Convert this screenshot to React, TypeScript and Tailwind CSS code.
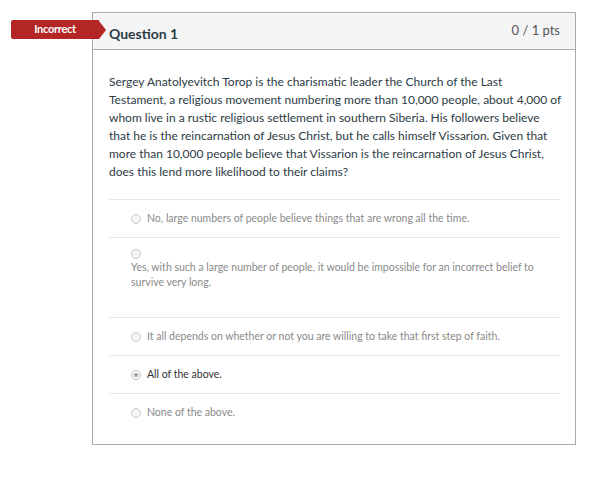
import React from 'react';

const answers = [
  { text: 'No, large numbers of people believe things that are wrong all the time.', selected: false, block: false },
  { text: 'Yes, with such a large number of people, it would be impossible for an incorrect belief to survive very long.', selected: false, block: true },
  { text: 'It all depends on whether or not you are willing to take that first step of faith.', selected: false, block: false },
  { text: 'All of the above.', selected: true, block: false },
  { text: 'None of the above.', selected: false, block: false },
];

const lines = [
  'Sergey Anatolyevitch Torop is the charismatic leader the Church of the Last',
  'Testament, a religious movement numbering more than 10,000 people, about 4,000 of',
  'whom live in a rustic religious settlement in southern Siberia. His followers believe',
  'that he is the reincarnation of Jesus Christ, but he calls himself Vissarion. Given that',
  'more than 10,000 people believe that Vissarion is the reincarnation of Jesus Christ,',
  'does this lend more likelihood to their claims?',
];

function Radio({ checked }: { checked: boolean }) {
  return (
    <span className="flex h-[10px] w-[10px] shrink-0 items-center justify-center rounded-full border border-[#c8c8c8] bg-[#f4f4f4]">
      {checked && <span className="h-[4px] w-[4px] rounded-full bg-[#a0a0a0]" />}
    </span>
  );
}

export default function App() {
  return (
    <div className="h-[478px] w-[616px] bg-white pt-3 font-['Lato','Liberation_Sans',sans-serif] text-[#2d3b45]">
      <div className="relative ml-[92px] w-[484px] border border-[#aaaaaa]">
        <div className="absolute left-[-82px] top-[7px] flex h-[19px] items-center">
          <div className="flex h-[19px] w-[88px] items-center justify-center rounded-l-[2px] bg-[#b42625] text-[11px] font-bold tracking-[-0.3px] text-white">
            Incorrect
          </div>
          <div className="h-0 w-0 border-y-[9.5px] border-l-[7px] border-y-transparent border-l-[#b42625]" />
        </div>
        <div className="flex h-[37px] items-center justify-between border-b border-[#aaaaaa] bg-[#f5f5f5] pl-4 pr-[15px]">
          <div className="pt-[4px] text-[14px] font-bold">Question 1</div>
          <div className="pb-[1px] text-[13px] text-[#555]">0 / 1 pts</div>
        </div>
        <div className="px-4 pt-[23px] pb-[23px]">
          <p className="mr-[-8px] whitespace-nowrap text-[12px] leading-[18px]">
            {lines.map((l, i) => (
              <React.Fragment key={i}>
                {l}
                {i < lines.length - 1 && <br />}
              </React.Fragment>
            ))}
          </p>
          <div className="mt-[18px]">
            {answers.map((a, i) => (
              <div key={i} className={`border-t border-[#e6e6e6] pl-[22px] text-[10.5px] ${i === 4 ? 'pt-[11px]' : ''} ${a.block ? 'h-[80px] pt-[11px]' : i === 4 ? '' : 'h-[38px]'} ${a.selected ? 'text-[#333]' : 'text-[#8a8a8a]'}`}>
                {a.block ? (
                  <div>
                    <Radio checked={a.selected} />
                    <div className="mt-[1px] leading-[15px]">{a.text}</div>
                  </div>
                ) : (
                  <div className={`flex items-center gap-[6px] ${i === 4 ? '' : 'h-full'}`}>
                    <Radio checked={a.selected} />
                    <span>{a.text}</span>
                  </div>
                )}
              </div>
            ))}
          </div>
        </div>
      </div>
    </div>
  );
}
